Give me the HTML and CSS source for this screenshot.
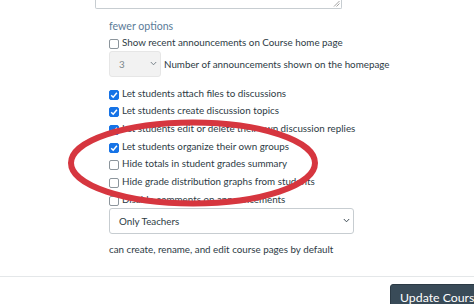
FILE: index.html
```html
<!DOCTYPE html>
<html>
<head>
<meta charset="utf-8">
<link rel="stylesheet" href="styles.css">
</head>
<body>
<div class="page">
  <div class="textarea-wrap"><div class="textarea"><svg class="grip" width="7" height="7" viewBox="0 0 7 7"><path d="M1 6.5 L6.5 1 M3.5 6.5 L6.5 3.5" stroke="#8a8a8a" stroke-width="0.8" fill="none"/></svg></div></div>
  <div class="options">
    <div class="fewer">fewer options</div>
    <label class="row"><span class="cb"></span><span>Show recent announcements on Course home page</span></label>
    <div class="count-row">
      <div class="small-select"><span>3</span><svg class="chev" width="7" height="5" viewBox="0 0 7 5"><path d="M0.8 1 L3.5 3.8 L6.2 1" stroke="#6b7780" stroke-width="0.9" fill="none"/></svg></div>
      <span>Number of announcements shown on the homepage</span>
    </div>
    <div class="checks">
      <label class="row"><span class="cb on"><svg viewBox="0 0 10 10"><path d="M2.2 5.2 L4.2 7.2 L7.9 2.8" stroke="#fff" stroke-width="1.5" fill="none"/></svg></span><span>Let students attach files to discussions</span></label>
      <label class="row"><span class="cb on"><svg viewBox="0 0 10 10"><path d="M2.2 5.2 L4.2 7.2 L7.9 2.8" stroke="#fff" stroke-width="1.5" fill="none"/></svg></span><span>Let students create discussion topics</span></label>
      <label class="row"><span class="cb on"><svg viewBox="0 0 10 10"><path d="M2.2 5.2 L4.2 7.2 L7.9 2.8" stroke="#fff" stroke-width="1.5" fill="none"/></svg></span><span>Let students edit or delete their own discussion replies</span></label>
      <label class="row"><span class="cb on"><svg viewBox="0 0 10 10"><path d="M2.2 5.2 L4.2 7.2 L7.9 2.8" stroke="#fff" stroke-width="1.5" fill="none"/></svg></span><span>Let students organize their own groups</span></label>
      <label class="row"><span class="cb"></span><span>Hide totals in student grades summary</span></label>
      <label class="row"><span class="cb"></span><span>Hide grade distribution graphs from students</span></label>
      <label class="row"><span class="cb"></span><span>Disable comments on announcements</span></label>
    </div>
    <div class="big-select"><span>Only Teachers</span><svg class="chev" width="7" height="5" viewBox="0 0 7 5"><path d="M0.8 1 L3.5 3.8 L6.2 1" stroke="#2d3b45" stroke-width="0.9" fill="none"/></svg></div>
    <div class="hint">can create, rename, and edit course pages by default</div>
  </div>
  <div class="footer">
    <button class="update">Update Course</button>
  </div>
  <svg class="annot" width="474" height="304" viewBox="0 0 474 304"><ellipse cx="193" cy="163" rx="122" ry="40.5" fill="none" stroke="#d6363f" stroke-width="6"/></svg>
</div>
</body>
</html>
```

FILE: styles.css
```css
html, body { margin: 0; padding: 0; background: #fff; }
body { font-family: "Lato", "Liberation Sans", sans-serif; color: #2d3b45; font-size: 9.8px; }
.page { position: relative; width: 474px; height: 304px; overflow: hidden; }
.textarea-wrap { padding-left: 95px; }
.textarea { position: relative; width: 245px; height: 8px; border: 1px solid #c7cdd1; border-top: none; border-radius: 0 0 2px 2px; box-sizing: content-box; }
.grip { position: absolute; right: 1px; bottom: 1px; }
.options { padding-left: 109px; padding-top: 10px; }
.fewer { color: #5b7b98; line-height: 14px; font-size: 10.6px; }
.row { display: flex; align-items: center; height: 17.7px; line-height: 14px; white-space: nowrap; }
.cb { width: 8px; height: 8px; border: 1px solid #8c959c; border-radius: 2px; background: #fff; margin-right: 3px; margin-top: 4px; flex: none; position: relative; }
.cb.on { background: #1673e6; border-color: #1673e6; }
.cb svg { position: absolute; left: -1px; top: -1px; width: 10px; height: 10px; }
.count-row { display: flex; align-items: center; height: 26px; white-space: nowrap; }
.small-select { width: 52px; height: 26px; box-sizing: border-box; background: #f2f2f2; border: 1px solid #e6e6e6; border-radius: 3px; display: flex; align-items: center; justify-content: space-between; padding: 0 3px 0 9px; color: #7d868c; margin-right: 3px; }
.checks { margin-top: 7px; }
.big-select { width: 245px; height: 26px; box-sizing: border-box; border: 1px solid #c7cdd1; border-radius: 3px; display: flex; align-items: center; justify-content: space-between; padding: 0 3px 0 9px; margin-top: 0; }
.hint { margin-top: 8px; line-height: 14px; }
.footer { margin-top: 20px; border-top: 1px solid #e4e7e9; padding-top: 7px; padding-left: 390px; }
.update { font-family: "Lato", "Liberation Sans", sans-serif; font-size: 12.3px; color: #fff; background: #394b58; border: 1px solid #2b3a45; border-radius: 3px; padding: 4px 9px; white-space: nowrap; height: 27px; }
.annot { position: absolute; left: 0; top: 0; pointer-events: none; }
```
